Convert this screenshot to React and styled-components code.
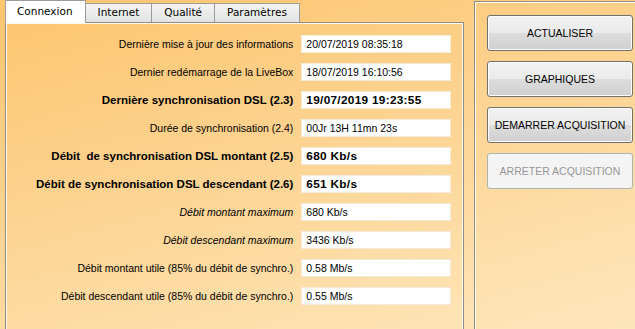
import React from "react";
import styled, { createGlobalStyle, css } from "styled-components";

const GlobalStyle = createGlobalStyle`
  html, body {
    margin: 0;
    padding: 0;
    width: 635px;
    height: 329px;
    overflow: hidden;
  }
  body {
    font-family: "Liberation Sans", Arial, sans-serif;
    font-size: 10.5px;
    color: #000;
    background: linear-gradient(165deg, #fcc56e 0%, #fdd391 45%, #fde0ad 80%, #fee6bb 100%);
  }
`;

const Window = styled.div`
  display: flex;
  gap: 10px;
  height: 329px;
  padding-left: 5px;
  box-sizing: border-box;
`;

const TabWidget = styled.div`
  width: 459px;
  display: flex;
  flex-direction: column;
`;

const TabBar = styled.div`
  display: flex;
  align-items: flex-end;
  height: 22px;
  position: relative;
  z-index: 1;
`;

const Tab = styled.div`
  box-sizing: border-box;
  height: 19px;
  padding: 0 12px;
  border: 1px solid #9c9c9c;
  border-left: none;
  border-bottom: none;
  background: linear-gradient(#f4f4f4, #e3e3e3);
  font-family: "DejaVu Sans", sans-serif;
  font-size: 10.5px;
  line-height: 17px;
  ${(p) =>
    p.$active &&
    css`
      border-left: 1px solid #9c9c9c;
      background: #fff;
      line-height: 21px;
      padding: 0 12px 1px 11px;
      margin-bottom: -1px;
      height: 23px;
    `}
`;

const Panel = styled.div`
  flex: 1;
  border: 1px solid #918c84;
  border-bottom: none;
  box-shadow: inset 1px 1px 0 #fff8ec, inset -1px 0 0 #fff8ec;
  padding: 12px 12px 0 0;
  display: flex;
  flex-direction: column;
  gap: 10px;
`;

const Row = styled.div`
  display: flex;
  align-items: center;
  height: 18px;
  font-weight: ${(p) => (p.$bold ? "bold" : "normal")};
`;

const Label = styled.div`
  width: 288px;
  padding-right: 8px;
  text-align: right;
  white-space: pre;
  font-style: ${(p) => (p.$italic ? "italic" : "normal")};
  font-size: ${(p) => (p.$bold ? "11.5px" : "10.5px")};
`;

const Field = styled.div`
  box-sizing: border-box;
  width: 150px;
  height: 18px;
  background: #fff;
  border: 1px solid #f3ead9;
  padding-left: 4px;
  line-height: 16px;
  font-size: ${(p) => (p.$bold ? "11.8px" : "10.5px")};
  letter-spacing: ${(p) => (p.$bold ? "0.3px" : "0")};
`;

const Side = styled.div`
  flex: 1;
  margin-top: 1px;
  border: 1px solid #918c84;
  border-right: none;
  border-bottom: none;
  box-shadow: inset 1px 1px 0 #fff8ec;
  padding: 13px 2px 0 12px;
  display: flex;
  flex-direction: column;
  gap: 10px;
`;

const Button = styled.button`
  box-sizing: border-box;
  width: 146px;
  height: 36px;
  border-radius: 3px;
  border: 1px solid #707070;
  background: linear-gradient(#f2f2f2 0%, #ebebeb 50%, #dddddd 51%, #cfcfcf 100%);
  box-shadow: inset 0 0 0 1px #fcfcfc;
  font-family: "Liberation Sans", Arial, sans-serif;
  font-size: 10.5px;
  color: #000;
  padding: 0;
  &:disabled {
    border-color: #adb2b5;
    background: #f4f4f4;
    box-shadow: none;
    color: #969696;
  }
`;

const rows = [
  { label: "Dernière mise à jour des informations", value: "20/07/2019 08:35:18" },
  { label: "Dernier redémarrage de la LiveBox", value: "18/07/2019 16:10:56" },
  { label: "Dernière synchronisation DSL (2.3)", value: "19/07/2019 19:23:55", bold: true },
  { label: "Durée de synchronisation (2.4)", value: "00Jr 13H 11mn 23s" },
  { label: "Débit  de synchronisation DSL montant (2.5)", value: "680 Kb/s", bold: true },
  { label: "Débit de synchronisation DSL descendant (2.6)", value: "651 Kb/s", bold: true },
  { label: "Débit montant maximum", value: "680 Kb/s", italic: true },
  { label: "Débit descendant maximum", value: "3436 Kb/s", italic: true },
  { label: "Débit montant utile (85% du débit de synchro.)", value: "0.58 Mb/s" },
  { label: "Débit descendant utile (85% du débit de synchro.)", value: "0.55 Mb/s" },
];

const tabs = ["Connexion", "Internet", "Qualité", "Paramètres"];

export default function App() {
  return (
    <>
      <GlobalStyle />
      <Window>
        <TabWidget>
          <TabBar>
            {tabs.map((t, i) => (
              <Tab key={t} $active={i === 0}>
                {t}
              </Tab>
            ))}
          </TabBar>
          <Panel>
            {rows.map((r) => (
              <Row key={r.label} $bold={r.bold}>
                <Label $italic={r.italic} $bold={r.bold}>
                  {r.label}
                </Label>
                <Field $bold={r.bold}>{r.value}</Field>
              </Row>
            ))}
          </Panel>
        </TabWidget>
        <Side>
          <Button>ACTUALISER</Button>
          <Button>GRAPHIQUES</Button>
          <Button>DEMARRER ACQUISITION</Button>
          <Button disabled>ARRETER ACQUISITION</Button>
        </Side>
      </Window>
    </>
  );
}
